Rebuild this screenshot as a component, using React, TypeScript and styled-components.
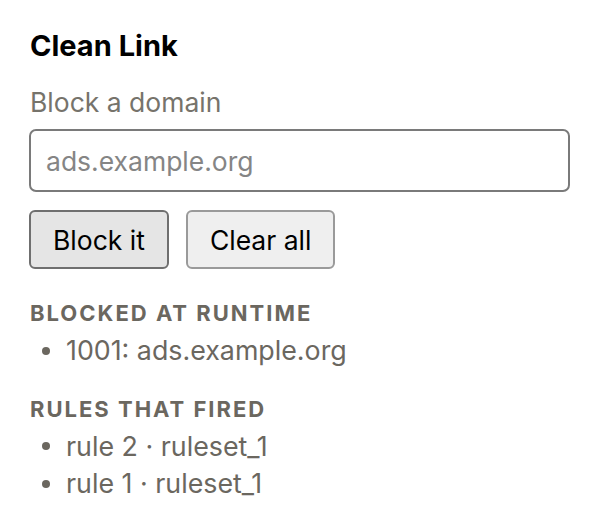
import React from "react";
import styled, { createGlobalStyle } from "styled-components";

const Global = createGlobalStyle`
  html, body { margin: 0; padding: 0; background: #ffffff; }
  body { font-family: Inter, "Noto Sans", "Liberation Sans", sans-serif; -webkit-font-smoothing: antialiased; }
  * { box-sizing: border-box; }
`;

const Panel = styled.main`
  width: 600px;
  padding: 29px 29px 20px 29px;
  display: flex;
  flex-direction: column;
`;

const Title = styled.h1`
  margin: 0 0 0 1px;
  font-size: 29px;
  line-height: 34px;
  font-weight: 700;
  color: #000;
`;

const Label = styled.label`
  margin: 23px 0 0 1px;
  font-size: 26.5px;
  line-height: 32px;
  color: #76736b;
`;

const Field = styled.input`
  margin-top: 11px;
  width: 541px;
  height: 63px;
  border: 2px solid #7a7a7a;
  border-radius: 7px;
  padding: 0 15px;
  font-family: inherit;
  font-size: 26.5px;
  color: #222;
  outline: none;
  &::placeholder { color: #858585; }
`;

const Actions = styled.div`
  display: flex;
  gap: 17px;
  margin-top: 18px;
`;

const Button = styled.button<{ $pressed?: boolean }>`
  height: 59px;
  padding: 0 22px;
  font-family: inherit;
  font-size: 26.5px;
  color: #000;
  border-radius: 6px;
  border: 2px solid ${(p) => (p.$pressed ? "#6f6f6f" : "#9a9a9a")};
  background: ${(p) => (p.$pressed ? "#e5e5e5" : "#efefef")};
`;

const Heading = styled.h2<{ $gap: number }>`
  margin: ${(p) => p.$gap}px 0 6px 1px;
  font-size: 22px;
  line-height: 26px;
  font-weight: 700;
  letter-spacing: 2px;
  text-transform: uppercase;
  color: #6b675f;
`;

const List = styled.ul`
  margin: 0;
  padding: 0;
  list-style: none;
`;

const Item = styled.li`
  display: flex;
  align-items: center;
  gap: 16px;
  padding-left: 13px;
  font-size: 26.8px;
  line-height: 37.6px;
  color: #6b675f;
  &::before {
    content: "";
    width: 8px;
    height: 8px;
    border-radius: 50%;
    background: #6b675f;
    flex: none;
  }
`;

export default function App() {
  return (
    <>
      <Global />
      <Panel>
        <Title>Clean Link</Title>
        <Label htmlFor="domain">Block a domain</Label>
        <Field id="domain" placeholder="ads.example.org" />
        <Actions>
          <Button $pressed>Block it</Button>
          <Button>Clear all</Button>
        </Actions>
        <Heading $gap={31}>Blocked at runtime</Heading>
        <List>
          <Item>1001: ads.example.org</Item>
        </List>
        <Heading $gap={26}>Rules that fired</Heading>
        <List>
          <Item>rule 2 · ruleset_1</Item>
          <Item>rule 1 · ruleset_1</Item>
        </List>
      </Panel>
    </>
  );
}
